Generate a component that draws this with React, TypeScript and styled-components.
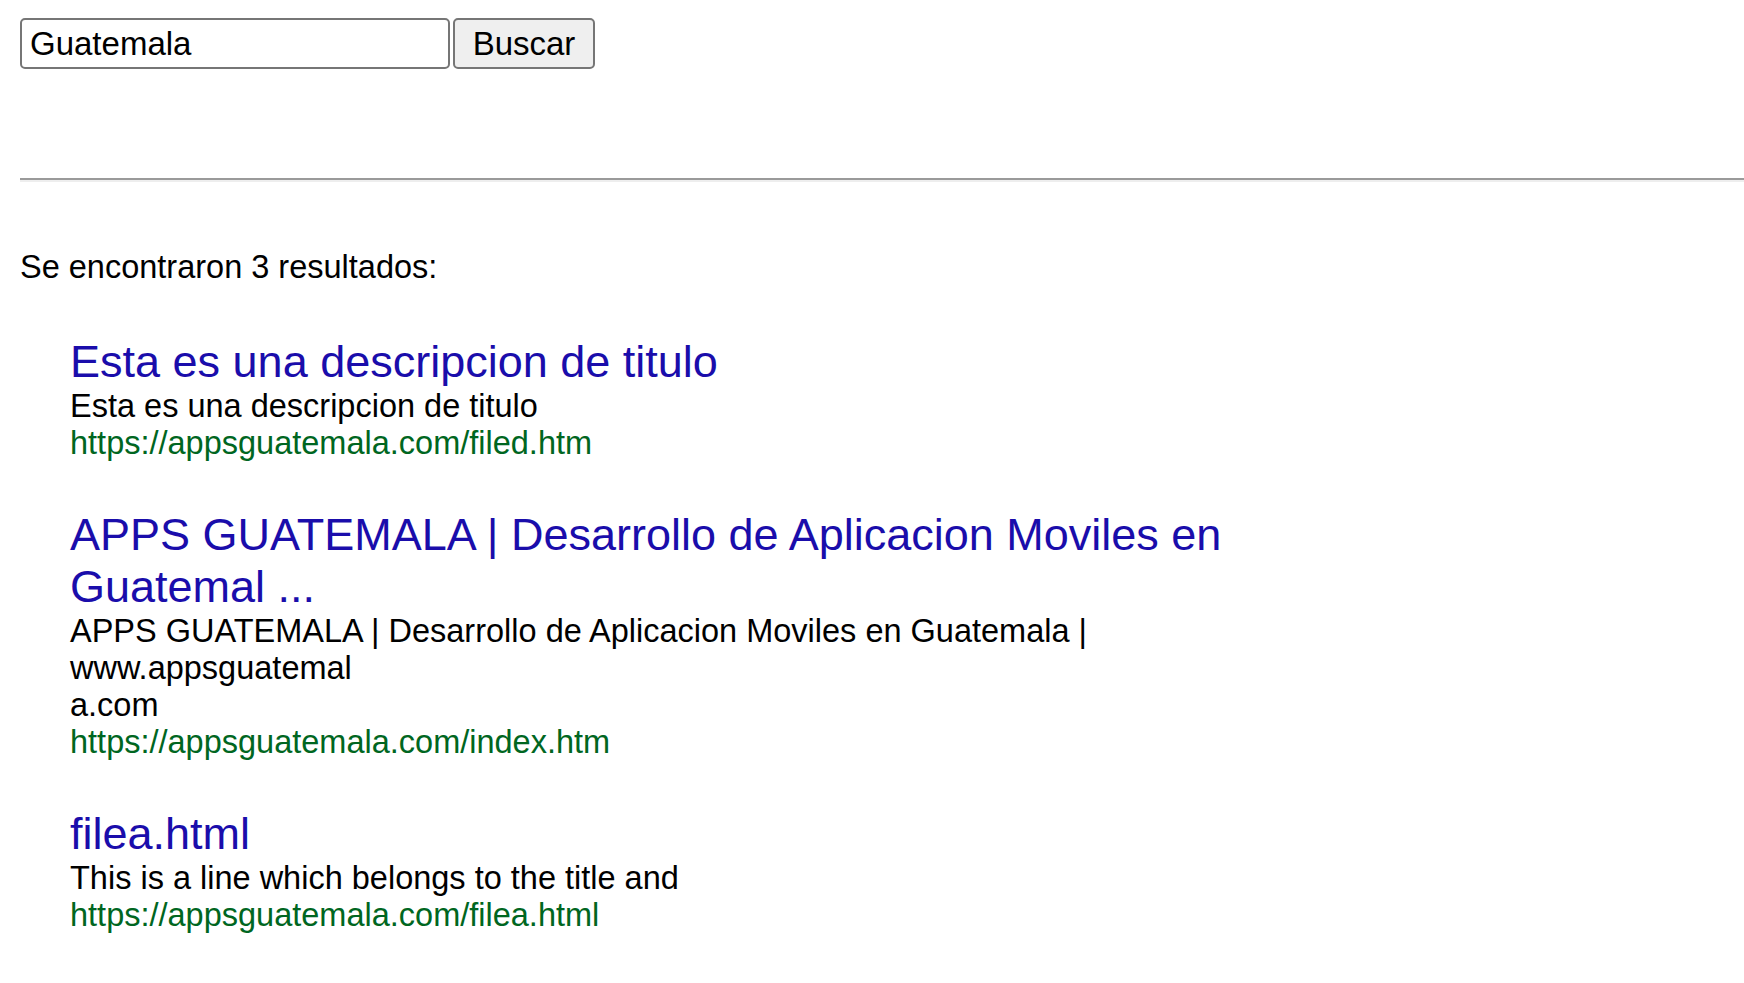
import React from 'react';
import styled, { createGlobalStyle } from 'styled-components';

// Results shown under the search box
const results = [
  {
    title: 'Esta es una descripcion de titulo',
    lines: ['Esta es una descripcion de titulo'],
    url: 'https://appsguatemala.com/filed.htm',
  },
  {
    title: 'APPS GUATEMALA | Desarrollo de Aplicacion Moviles en Guatemal ...',
    lines: [
      'APPS GUATEMALA | Desarrollo de Aplicacion Moviles en Guatemala |',
      'www.appsguatemal',
      'a.com',
    ],
    url: 'https://appsguatemala.com/index.htm',
  },
  {
    title: 'filea.html',
    lines: ['This is a line which belongs to the title and'],
    url: 'https://appsguatemala.com/filea.html',
  },
];

const App: React.FC = () => {
  return (
    <>
      <GlobalStyle />
      <Page>
        <SearchForm onSubmit={(e) => e.preventDefault()}>
          <SearchInput type="text" defaultValue="Guatemala" />
          <SearchButton type="submit">Buscar</SearchButton>
        </SearchForm>

        <Divider />

        <Summary>Se encontraron {results.length} resultados:</Summary>

        <ResultList>
          {results.map((result, i) => {
            return (
              <ResultItem key={i}>
                <ResultTitle href="#">{result.title}</ResultTitle>
                <ResultText>
                  {result.lines.map((line, j) => (
                    <React.Fragment key={j}>
                      {j > 0 && <br />}
                      {line}
                    </React.Fragment>
                  ))}
                </ResultText>
                <ResultUrl>{result.url}</ResultUrl>
              </ResultItem>
            );
          })}
        </ResultList>
      </Page>
    </>
  );
};

const GlobalStyle = createGlobalStyle`
  html, body {
    margin: 0;
    padding: 0;
    background: #ffffff;
    overflow-x: hidden;
  }
  body {
    font-family: "Liberation Sans", Arial, sans-serif;
    color: #000000;
  }
`;

const Page = styled.div`
  padding: 18px 0 40px 20px;
`;

const SearchForm = styled.form`
  display: flex;
  align-items: stretch;
  gap: 3px;
  height: 51px;
  margin: 0;
`;

const SearchInput = styled.input`
  box-sizing: border-box;
  width: 430px;
  height: 100%;
  padding: 2px 8px;
  border: 2.5px solid #767676;
  border-radius: 5px;
  font-family: "Liberation Sans", Arial, sans-serif;
  font-size: 33px;
  color: #000000;
  background: #ffffff;
  outline: none;
`;

const SearchButton = styled.button`
  box-sizing: border-box;
  width: 142px;
  height: 100%;
  padding: 2px 15px;
  border: 2.5px solid #767676;
  border-radius: 5px;
  background: #efefef;
  font-family: "Liberation Sans", Arial, sans-serif;
  font-size: 33px;
  color: #000000;
  cursor: pointer;
`;

const Divider = styled.hr`
  margin: 109px 0 0 0;
  height: 0;
  border: none;
  border-top: 2.5px solid #9a9a9a;
  border-bottom: 2.5px solid #eeeeee;
`;

const Summary = styled.p`
  margin: 67px 0 0 0;
  font-size: 32.5px;
  line-height: 37px;
`;

const ResultList = styled.div`
  display: flex;
  flex-direction: column;
  gap: 47px;
  margin-top: 50px;
  padding-left: 50px;
  max-width: 1250px;
`;

const ResultItem = styled.div`
  display: flex;
  flex-direction: column;
`;

const ResultTitle = styled.a`
  font-size: 45px;
  line-height: 52px;
  color: #1a0dab;
  text-decoration: none;
`;

const ResultText = styled.div`
  font-size: 32.5px;
  line-height: 37px;
  color: #000000;
`;

const ResultUrl = styled.div`
  font-size: 32.5px;
  line-height: 37px;
  color: #006621;
`;

export default App;
